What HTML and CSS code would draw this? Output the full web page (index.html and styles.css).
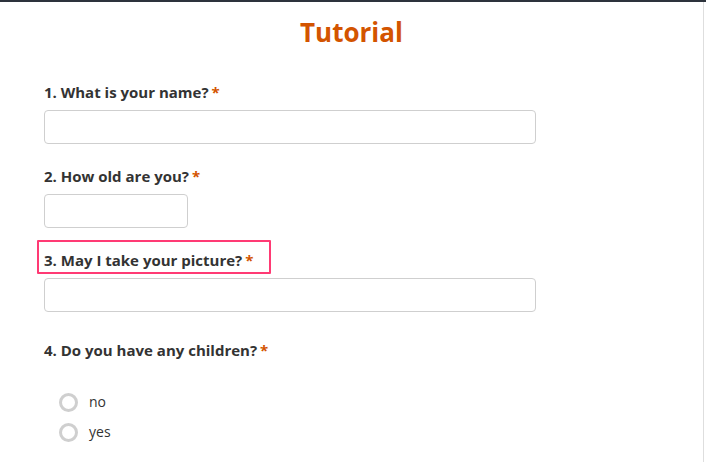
FILE: index.html
```html
<!DOCTYPE html>
<html lang="en">
<head>
<meta charset="utf-8">
<title>Tutorial</title>
<link rel="stylesheet" href="styles.css">
</head>
<body>
<div class="page">
  <h1 class="title">Tutorial</h1>
  <form class="form">
    <div class="question">
      <label class="label">1. What is your name?<span class="req">*</span></label>
      <input class="input wide" type="text">
    </div>
    <div class="question">
      <label class="label">2. How old are you?<span class="req">*</span></label>
      <input class="input short" type="text">
    </div>
    <div class="question">
      <label class="label highlighted">3. May I take your picture?<span class="req">*</span></label>
      <input class="input wide" type="text">
    </div>
    <div class="question radio-question">
      <label class="label">4. Do you have any children?<span class="req">*</span></label>
      <div class="options">
        <div class="option"><span class="radio"></span><span class="option-text">no</span></div>
        <div class="option"><span class="radio"></span><span class="option-text">yes</span></div>
      </div>
    </div>
  </form>
</div>
</body>
</html>
```

FILE: styles.css
```css
html, body {
  margin: 0;
  padding: 0;
  background: #fff;
}

body {
  font-family: "Open Sans", "Liberation Sans", sans-serif;
  color: #333;
  border-top: 2px solid #2d333c;
}

.page {
  width: 703px;
  height: 460px;
  border-right: 1px solid #dedede;
  overflow: hidden;
}

.title {
  margin: 14px 0 0;
  text-align: center;
  font-size: 26px;
  line-height: 32px;
  font-weight: 700;
  color: #d35400;
}

.form {
  padding: 34px 0 0 44px;
  display: flex;
  flex-direction: column;
  gap: 22px;
}

.question {
  display: flex;
  flex-direction: column;
  align-items: flex-start;
}

.label {
  position: relative;
  font-size: 15px;
  line-height: 21px;
  font-weight: 700;
  color: #333;
  margin-bottom: 7px;
}

.req {
  color: #d35400;
  margin-left: 3px;
}

.highlighted::after {
  content: "";
  position: absolute;
  left: -7px;
  right: -18px;
  top: -10px;
  bottom: -3px;
  border: 2px solid #ff3a74;
  border-radius: 1px;
}

.input {
  box-sizing: border-box;
  height: 34px;
  border: 1px solid #cfcfcf;
  border-radius: 4px;
  background: #fff;
  margin: 0;
  padding: 0 8px;
  font: inherit;
}

.wide {
  width: 492px;
}

.short {
  width: 144px;
}

.radio-question {
  margin-top: 6px;
}

.options {
  display: flex;
  flex-direction: column;
  gap: 10px;
  margin-top: 24px;
  padding-left: 15px;
}

.option {
  display: flex;
  align-items: center;
  height: 20px;
}

.radio {
  box-sizing: border-box;
  width: 19px;
  height: 19px;
  border: 3px solid #cfcfcf;
  border-radius: 50%;
  background: #fff;
}

.option-text {
  margin-left: 11px;
  font-size: 14px;
  line-height: 20px;
  color: #333;
}
```
